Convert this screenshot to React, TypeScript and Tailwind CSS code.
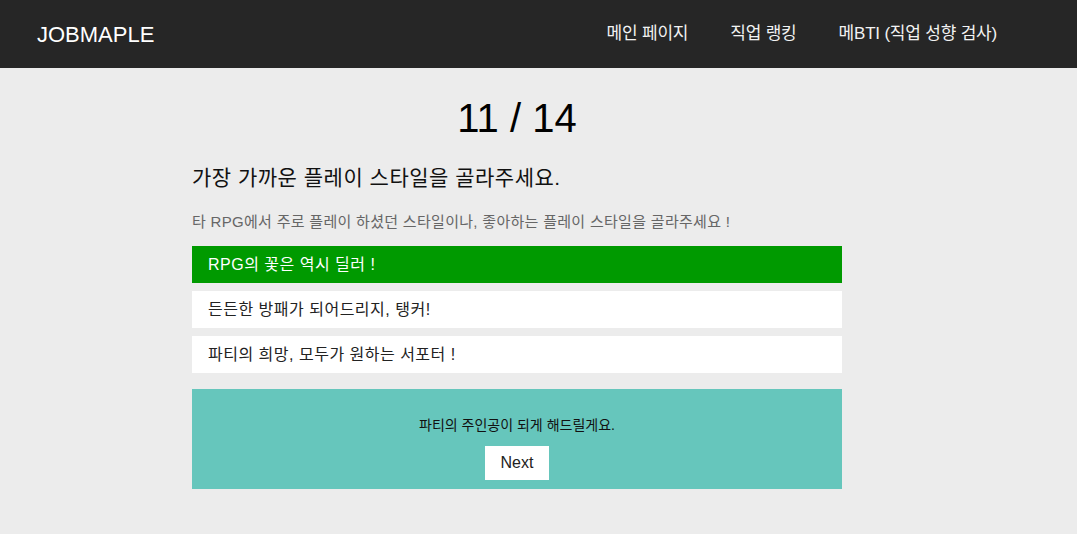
import { useState } from "react";

const options = [
  "RPG의 꽃은 역시 딜러 !",
  "든든한 방패가 되어드리지, 탱커!",
  "파티의 희망, 모두가 원하는 서포터 !",
];

const font = { fontFamily: '"Liberation Sans", "Noto Sans CJK KR", sans-serif' };

export default function App() {
  const [selected, setSelected] = useState(0);

  return (
    <div className="min-h-screen bg-[#ececec]" style={font}>
      <header className="h-[68px] bg-[#262626] flex items-center justify-between pl-[37px] pr-[80px]">
        <span className="text-white text-[22px]">JOBMAPLE</span>
        <nav className="flex items-center gap-[42px] text-[#f2f2f2] text-[17px] tracking-[-0.2px]">
          <a>메인 페이지</a>
          <a>직업 랭킹</a>
          <a>메BTI (직업 성향 검사)</a>
        </nav>
      </header>

      <main className="w-[650px] ml-[192px] pt-[26px]">
        <h1 className="text-center text-[40px] leading-[48px] text-black">11 / 14</h1>
        <h2 className="mt-[22px] text-[21px] leading-[28px] tracking-[0.5px] text-[#111]">
          가장 가까운 플레이 스타일을 골라주세요.
        </h2>
        <p className="mt-[20px] text-[15px] leading-[20px] tracking-[0.3px] text-[#666]">
          타 RPG에서 주로 플레이 하셨던 스타일이나, 좋아하는 플레이 스타일을 골라주세요 !
        </p>

        <div className="mt-[14px] flex flex-col gap-[8px]">
          {options.map((o, i) => (
            <button
              key={o}
              onClick={() => setSelected(i)}
              className={`h-[37px] pl-[16px] text-left text-[16px] tracking-[0.5px] ${
                selected === i ? "bg-[#009a00] text-white" : "bg-white text-[#222]"
              }`}
            >
              {o}
            </button>
          ))}
        </div>

        <div className="mt-[16px] h-[100px] bg-[#66c6bc] flex flex-col items-center pt-[27px]">
          <p className="text-[14px] leading-[18px] text-[#111]">파티의 주인공이 되게 해드릴게요.</p>
          <button className="mt-[12px] w-[64px] h-[34px] bg-white text-[16px] text-[#222]">Next</button>
        </div>
      </main>
    </div>
  );
}
